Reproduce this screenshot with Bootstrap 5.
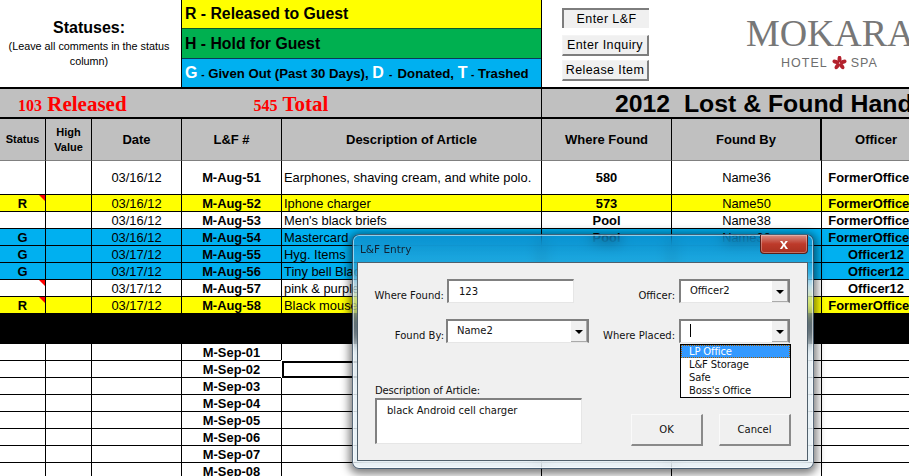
<!DOCTYPE html>
<html lang="en">
<head>
<meta charset="utf-8">
<title>2012 Lost &amp; Found</title>
<link href="https://cdn.jsdelivr.net/npm/bootstrap@5.3.0/dist/css/bootstrap.min.css" rel="stylesheet">
<style>
html,body{margin:0;height:476px;overflow:hidden;background:#fff}
body{font-family:"Liberation Sans",Arial,sans-serif;color:#000}
.wb{position:relative;width:909px;height:476px;overflow:hidden}
.wb-top{height:89px;border-bottom:2px solid #000;width:909px}
.wb-top>div{flex:none}
.st-note{width:182px;border-right:1px solid #000;font-size:10.8px;line-height:15px;padding:0 10px 0 7px}
.st-note b{font-size:16px;line-height:20px;display:block;margin-bottom:1px}
.st-keys{width:360px;border-right:1px solid #000;font-weight:700}
.k-y{height:29px;background:#ff0;border-bottom:1px solid #0a5a2c;font-size:15.8px;line-height:27px;padding-left:3px}
.k-g{height:30px;background:#00b050;border-bottom:1px solid #0a3a5c;font-size:15.8px;line-height:29px;padding-left:3px}
.k-b{height:28px;background:#00b0f0;font-size:13.2px;line-height:28px;padding-left:3px;white-space:nowrap}
.k-b i{font-style:normal;color:#fff;font-size:16px}
.k-b s{text-decoration:none;font-size:10px}
.k-b s.wd{margin:0 1.5px}
.side-btns{width:108px;padding:8px 0 0 20px}
.xl-btn{display:block;width:87px;height:21px;padding:0;margin-bottom:4px;font-size:12.5px;line-height:18px;border-radius:0;color:#000;background:#f0f0f0;border:1px solid;border-color:#f4f4f4 #7d7d7d #7d7d7d #f4f4f4;border-width:1px 2px 2px 1px;letter-spacing:.4px;text-align:center}
.xl-btn.on{height:20px;margin-bottom:7px;border-color:#7d7d7d #f0f0f0 #f0f0f0 #7d7d7d;border-width:2px 0 0 2px}
.logo-box{padding:12px 0 0 97px;width:260px;margin-left:-1px;white-space:nowrap;overflow:hidden;color:#6e6e6e}
.logo-m{font-family:"Liberation Serif",serif;font-size:38px;line-height:42px;letter-spacing:-.1px;color:#777}
.logo-s{font-size:12.5px;line-height:14px;letter-spacing:1px;padding-left:35px;margin-top:2px;display:flex;align-items:center;gap:3px}
.wb-band{height:30px;border-bottom:2px solid #000;background:#c0c0c0;width:909px}
.b-left{width:542px;flex:none;border-right:1px solid #000;font-family:"Liberation Serif",serif;font-weight:700;color:#f00;font-size:21px;line-height:30px;padding-left:18px;white-space:nowrap}
.b-left small{font-size:16px}
.b-left span+span{margin-left:127px}
.b-right{padding-left:73px;font-weight:700;font-size:24.8px;line-height:30px;white-space:pre;overflow:hidden;flex:1}
.table.sheet{table-layout:fixed;width:931px;margin:0;border-collapse:separate;border-spacing:0;font-size:12.9px;line-height:15px;--bs-table-bg:#fff;--bs-table-border-color:#000}
.table.sheet>*>tr>*{padding:0;height:17px;border-width:0 1px 1px 0;border-style:solid;border-color:#000;text-align:center;vertical-align:middle;white-space:nowrap;overflow:hidden;position:relative;color:#000;font-weight:400}
.table.sheet>thead>tr>th{height:42px;font-weight:700;border-bottom-color:#808080;--bs-table-bg:#c0c0c0;white-space:normal;line-height:15px;font-size:13px}
.table.sheet>thead>tr>th.sm{font-size:11px}
.table.sheet>thead>tr>th.thk{border-right-width:2px}
.table.sheet>tbody>tr>td.bd{font-weight:700}
.table.sheet>tbody>tr>td.fo{padding-left:5px}
.table.sheet>tbody>tr>td.ds{text-align:left;padding-left:2px}
.table.sheet>tbody>tr.tall>td{height:34px}
.table.sheet>tbody>tr.blk>td{height:30px;--bs-table-bg:#000;border:0}
.r-y{--bs-table-bg:#ff0}
.r-b{--bs-table-bg:#00b0f0}
.table.sheet>tbody>tr>td.cm::after{content:"";position:absolute;top:0;right:0;border-style:solid;border-width:0 6px 6px 0;border-color:transparent #f00 transparent transparent}
.table.sheet>tbody>tr>td.pick{outline:2px solid #000;outline-offset:-2px;box-shadow:0 0 0 1px #fff}
.dlg{position:absolute;left:352px;top:234px;width:462px;height:235px;padding:27px 5px 6px 4px;border-radius:7px;border:1px solid rgba(40,60,80,.75);background:linear-gradient(180deg,rgba(20,110,175,.38),rgba(90,170,215,.3) 11%,rgba(225,240,248,.6) 55%);-webkit-backdrop-filter:blur(7px);backdrop-filter:blur(7px);box-shadow:0 2px 9px 3px rgba(0,0,0,.5),inset 0 0 0 1px rgba(255,255,255,.55);font-family:"DejaVu Sans",sans-serif;font-size:10px;line-height:13px;color:#111}
.dlg-t{position:absolute;left:7px;top:7px;font-size:10.5px;line-height:14px;color:#123}
.dlg-x{position:absolute;right:5px;top:0;width:48px;height:19px;border:1px solid #5a1e18;border-top:0;border-radius:0 0 4px 4px;background:linear-gradient(180deg,#d98f85,#bd3a2a 50%,#a83020);color:#fff;font:700 15px/16px "Liberation Sans",sans-serif;text-align:center;padding:0;box-shadow:inset 0 0 0 1px rgba(255,255,255,.3)}
.dlg-c{height:199px;background:#f0f0f0;border:1px solid #50606c;padding:16px 0 0;position:relative}
.fld-l{width:86px;text-align:right;padding-bottom:1px;margin-right:3px}
.fld-l.tight{margin-right:2px}
.fld-r{width:90px;text-align:right;padding-bottom:1px;margin-right:4px}
.fld-r.r1{margin-left:11px}
.fld-r.r2{margin-left:-4px}
.form-control.w-in{width:127px;height:24px;flex:none;border-radius:0;border:solid;border-width:2px 1px 1px 2px;border-color:#808080 #e6e6e6 #e6e6e6 #808080;padding:2px 10px;font-size:10px;line-height:14px;color:#111;font-family:inherit;background:#fff;box-shadow:none}
.w-combo{height:24px;flex:none;display:flex;background:#fff;border:solid;border-width:2px 2px 1px 2px;border-color:#808080 #808080 #e6e6e6 #808080;padding:3px 0 0 9px;line-height:14px}
.w-combo.c-a{width:111px}
.w-combo.c-b{width:143px}
.w-combo span{flex:1}
.w-combo span.caret{display:inline-block;flex:none;width:1px;height:13px;background:#000;margin-right:auto}
.w-arrow{flex:none;width:17px;height:21px;margin-top:-3px;background:#f0f0f0;border-left:1px solid #fff;box-shadow:inset -1px -1px 0 #aaa;display:flex;align-items:center;justify-content:center}
.w-arrow::before{content:"";border-style:solid;border-width:4px 4px 0;border-color:#000 transparent transparent}
.row-gap2{margin-top:16px}
.row-gap3{margin-top:41px}
.desc-w{width:207px;margin-left:17px;letter-spacing:-.15px}
.form-control.w-ta{width:207px;height:46px;border-radius:0;border:solid;border-width:2px 1px 1px 2px;border-color:#808080 #e6e6e6 #e6e6e6 #808080;padding:4px 10px;font-size:10px;line-height:14px;color:#111;font-family:inherit;resize:none;box-shadow:none;margin-top:1px;overflow:hidden}
.btn-pair{gap:16px;margin-left:49px;margin-bottom:-2px}
.w-btn{width:72px;height:32px;padding:0;border-radius:0;background:#f0f0f0;font-size:10px;color:#111;font-family:inherit;border:solid;border-width:1px 2px 2px 1px;border-color:#fafafa #8a8a8a #8a8a8a #fafafa;line-height:26px}
.drop{position:absolute;left:322px;top:81px;width:111px;height:54px;z-index:2;border:1px solid #000;border-radius:0;background:#fff;font-size:10px;line-height:13px;letter-spacing:-.15px}
.list-group-item.d-it{padding:0 0 0 8px;border:0;border-radius:0;background:transparent;color:#111;font-size:10px;line-height:13px;height:13px}
.list-group-item.d-it.active{background:#3399ff;color:#fff;margin-bottom:0;outline:1px dotted #a05a00;outline-offset:-1px}
</style>
</head>
<body>
<div class="wb">
  <div class="wb-top d-flex">
    <div class="st-note d-flex flex-column justify-content-center text-center"><b>Statuses:</b>(Leave all comments in the status column)</div>
    <div class="st-keys">
      <div class="k-y">R - Released to Guest</div>
      <div class="k-g">H - Hold for Guest</div>
      <div class="k-b"><i>G</i> <s>-</s> Given Out (Past 30 Days), <i>D</i> <s class="wd">-</s> Donated, <i>T</i> <s>-</s> Trashed</div>
    </div>
    <div class="side-btns">
      <button class="btn xl-btn on" type="button">Enter L&amp;F</button>
      <button class="btn xl-btn" type="button">Enter Inquiry</button>
      <button class="btn xl-btn" type="button">Release Item</button>
    </div>
    <div class="logo-box">
      <div class="logo-m">MOKARA</div>
      <div class="logo-s">HOTEL
        <svg width="17" height="14" viewBox="-10 -9 20 18" aria-hidden="true"><g fill="#b3212d"><ellipse cx="0" cy="-5" rx="2.6" ry="4.4"/><ellipse cx="0" cy="-5" rx="2.6" ry="4.4" transform="rotate(72)"/><ellipse cx="0" cy="-5" rx="2.6" ry="4.4" transform="rotate(144)"/><ellipse cx="0" cy="-5" rx="2.6" ry="4.4" transform="rotate(216)"/><ellipse cx="0" cy="-5" rx="2.6" ry="4.4" transform="rotate(288)"/></g></svg>
        SPA</div>
    </div>
  </div>
  <div class="wb-band d-flex">
    <div class="b-left"><span><small>103</small> Released</span><span><small>545</small> Total</span></div>
    <div class="b-right">2012  Lost &amp; Found Handling</div>
  </div>
  <table class="table sheet">
    <colgroup><col style="width:46px"><col style="width:46px"><col style="width:90px"><col style="width:100px"><col style="width:260px"><col style="width:130px"><col style="width:150px"><col style="width:109px"></colgroup>
    <thead>
      <tr><th class="sm">Status</th><th class="sm">High Value</th><th>Date</th><th>L&amp;F #</th><th>Description of Article</th><th>Where Found</th><th class="thk">Found By</th><th>Officer</th></tr>
    </thead>
    <tbody>
      <tr class="tall"><td></td><td></td><td>03/16/12</td><td class="bd">M-Aug-51</td><td class="ds">Earphones, shaving cream, and white polo.</td><td class="bd">580</td><td>Name36</td><td class="bd fo">FormerOfficer12</td></tr>
      <tr class="r-y"><td class="bd cm">R</td><td></td><td>03/16/12</td><td class="bd">M-Aug-52</td><td class="ds">Iphone charger</td><td class="bd">573</td><td>Name50</td><td class="bd fo">FormerOfficer12</td></tr>
      <tr><td></td><td></td><td>03/16/12</td><td class="bd">M-Aug-53</td><td class="ds">Men's black briefs</td><td class="bd">Pool</td><td>Name38</td><td class="bd fo">FormerOfficer12</td></tr>
      <tr class="r-b"><td class="bd">G</td><td></td><td>03/16/12</td><td class="bd">M-Aug-54</td><td class="ds">Mastercard</td><td class="bd">Pool</td><td>Name38</td><td class="bd fo">FormerOfficer12</td></tr>
      <tr class="r-b"><td class="bd">G</td><td></td><td>03/17/12</td><td class="bd">M-Aug-55</td><td class="ds">Hyg. Items</td><td></td><td></td><td class="bd">Officer12</td></tr>
      <tr class="r-b"><td class="bd">G</td><td></td><td>03/17/12</td><td class="bd">M-Aug-56</td><td class="ds">Tiny bell Black</td><td></td><td></td><td class="bd">Officer12</td></tr>
      <tr><td class="cm"></td><td></td><td>03/17/12</td><td class="bd">M-Aug-57</td><td class="ds">pink &amp; purple</td><td></td><td></td><td class="bd">Officer12</td></tr>
      <tr class="r-y"><td class="bd cm">R</td><td></td><td>03/17/12</td><td class="bd">M-Aug-58</td><td class="ds">Black mouse</td><td></td><td></td><td class="bd fo">FormerOfficer12</td></tr>
      <tr class="blk"><td colspan="8"></td></tr>
      <tr><td></td><td></td><td></td><td class="bd">M-Sep-01</td><td></td><td></td><td></td><td></td></tr>
      <tr><td></td><td></td><td></td><td class="bd">M-Sep-02</td><td class="pick"></td><td></td><td></td><td></td></tr>
      <tr><td></td><td></td><td></td><td class="bd">M-Sep-03</td><td></td><td></td><td></td><td></td></tr>
      <tr><td></td><td></td><td></td><td class="bd">M-Sep-04</td><td></td><td></td><td></td><td></td></tr>
      <tr><td></td><td></td><td></td><td class="bd">M-Sep-05</td><td></td><td></td><td></td><td></td></tr>
      <tr><td></td><td></td><td></td><td class="bd">M-Sep-06</td><td></td><td></td><td></td><td></td></tr>
      <tr><td></td><td></td><td></td><td class="bd">M-Sep-07</td><td></td><td></td><td></td><td></td></tr>
      <tr><td></td><td></td><td></td><td class="bd">M-Sep-08</td><td></td><td></td><td></td><td></td></tr>
    </tbody>
  </table>

  <div class="dlg">
    <div class="dlg-t">L&amp;F Entry</div>
    <button class="dlg-x" type="button">x</button>
    <div class="dlg-c">
      <div class="d-flex align-items-end">
        <div class="fld-l">Where Found:</div>
        <input class="form-control w-in" value="123" aria-label="Where Found">
        <div class="fld-r r1">Officer:</div>
        <div class="w-combo c-a"><span>Officer2</span><div class="w-arrow"></div></div>
      </div>
      <div class="d-flex align-items-end row-gap2">
        <div class="fld-l tight">Found By:</div>
        <div class="w-combo c-b"><span>Name2</span><div class="w-arrow"></div></div>
        <div class="fld-r r2">Where Placed:</div>
        <div class="w-combo c-a"><span class="caret"></span><div class="w-arrow"></div></div>
      </div>
      <div class="d-flex align-items-end row-gap3">
        <div class="desc-w">
          <div>Description of Article:</div>
          <textarea class="form-control w-ta" aria-label="Description of Article">black Android cell charger</textarea>
        </div>
        <div class="d-flex btn-pair">
          <button class="btn w-btn" type="button">OK</button>
          <button class="btn w-btn" type="button">Cancel</button>
        </div>
      </div>
      <div class="list-group drop">
        <div class="list-group-item d-it active">LP Office</div>
        <div class="list-group-item d-it">L&amp;F Storage</div>
        <div class="list-group-item d-it">Safe</div>
        <div class="list-group-item d-it">Boss's Office</div>
      </div>
    </div>
  </div>
</div>
<script src="https://cdn.jsdelivr.net/npm/bootstrap@5.3.0/dist/js/bootstrap.bundle.min.js"></script>
</body>
</html>
